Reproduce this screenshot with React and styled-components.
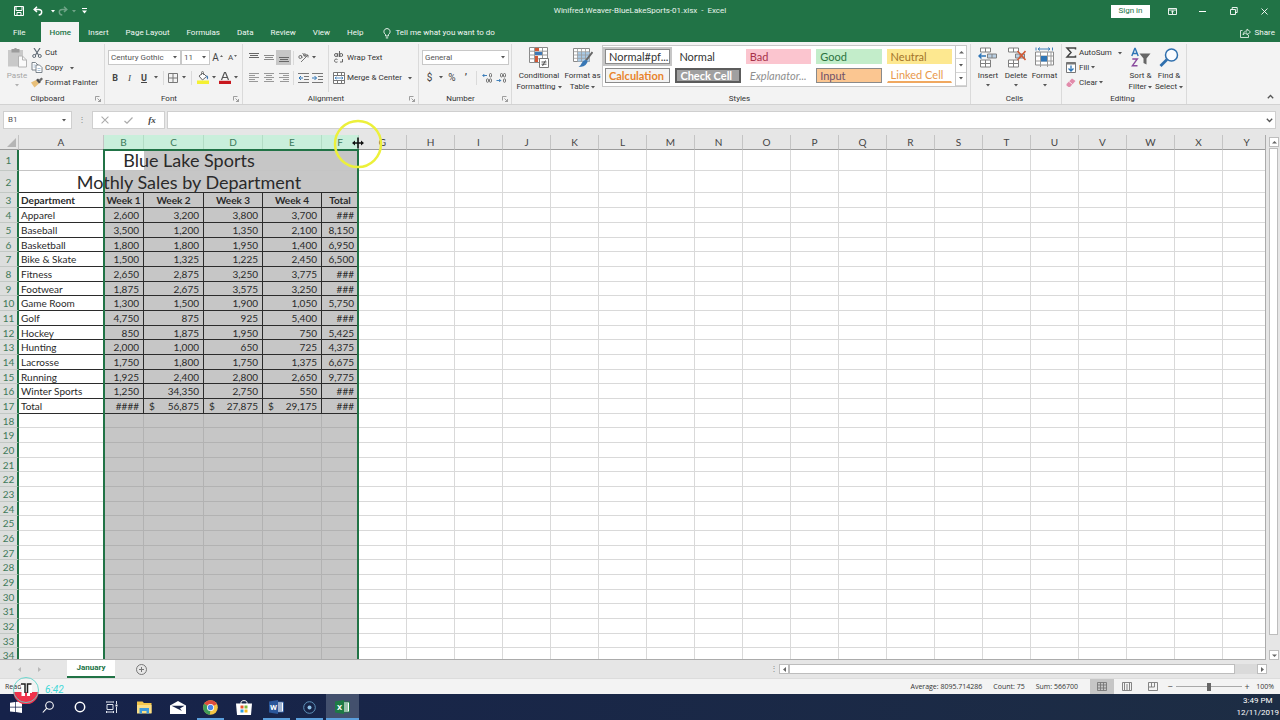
import React from 'react'
import styled, { createGlobalStyle } from 'styled-components'

const GlobalStyle = createGlobalStyle`
  * {
    box-sizing: border-box;
  }
  body {
    margin: 0;
    font-family: Roboto, 'Open Sans', sans-serif;
    font-size: 8px;
    line-height: 10px;
    color: #333;
  }
  button, input, select {
    margin: 0;
    padding: 0;
    border: 0;
    background: transparent;
    font: inherit;
    color: inherit;
  }
  button {
    white-space: nowrap;
  }
`

const sheetFont = "Lato, 'Open Sans', sans-serif"

const App = styled.div`
  position: relative;
  display: flex;
  flex-direction: column;
  height: 100vh;
  overflow: hidden;
  background-color: #e6e6e6;
`

/* title bar */
const TitleBar = styled.header`
  display: grid;
  grid-template-columns: 1fr auto 1fr;
  align-items: center;
  height: 22px;
  color: #e8f3ec;
  background-color: #217346;
`
const QuickAccess = styled.div`
  display: flex;
  align-items: center;
  padding-left: 11px;
`
const WindowControls = styled.div`
  display: flex;
  justify-content: flex-end;
  align-items: center;
`
const SignIn = styled.button`
  width: 39px;
  height: 13px;
  margin-right: 7px;
  color: #217346;
  background-color: #fff;
`
const Tool = styled.button`
  display: flex;
  flex: none;
  justify-content: center;
  align-items: center;
  width: ${(props) => props.$width || 15}px;
  height: 15px;
  background-color: ${(props) => (props.$pressed ? '#c6c6c6' : 'transparent')};
  opacity: ${(props) => (props.disabled ? 0.35 : 1)};
  svg {
    flex: none;
  }
`

/* ribbon tabs */
const TabBar = styled.nav`
  display: flex;
  align-items: stretch;
  height: 20px;
  color: #f2f8f4;
  background-color: #217346;
`
const RibbonTab = styled.button`
  padding: 2px ${(props) => (props.$first ? 15 : 8)}px 0
    ${(props) => (props.$first ? 13 : 9)}px;
  color: ${(props) => (props.$active ? '#217346' : 'inherit')};
  font-weight: ${(props) => (props.$active ? 500 : 400)};
  background-color: ${(props) => (props.$active ? '#f3f3f3' : 'transparent')};
`
const TellMe = styled.button`
  display: flex;
  align-items: center;
  gap: 4px;
  padding: 2px 0 0 12px;
`
const Share = styled(TellMe)`
  margin-left: auto;
  padding-right: 5px;
`

/* ribbon */
const Ribbon = styled.section`
  display: flex;
  flex: none;
  height: 63px;
  border-bottom: 1px solid #d2d2d2;
  background-color: #f3f3f3;
`
const GroupBox = styled.div`
  display: flex;
  flex-direction: column;
  flex: ${(props) => (props.$width ? 'none' : 1)};
  width: ${(props) => (props.$width ? `${props.$width}px` : 'auto')};
  margin-top: 2px;
  border-right: 1px solid #dadada;
`
const GroupBody = styled.div`
  display: flex;
  flex: 1;
  padding: 1px 3px 0;
`
const GroupFooter = styled.div`
  display: flex;
  align-items: center;
  height: 12px;
  padding: 2px 3px 0 0;
  span {
    flex: 1;
    text-align: center;
  }
`
const Stack = styled.div`
  display: flex;
  flex-direction: column;
  width: ${(props) => (props.$width ? `${props.$width}px` : 'auto')};
  padding-left: ${(props) => props.$inset || 0}px;
`
const ToolStack = styled(Stack)`
  gap: 5px;
  padding-top: 5px;
  border-right: ${(props) => (props.$divided ? '1px solid #dadada' : '0')};
`
const Row = styled.div`
  display: flex;
  align-items: center;
`
const Divider = styled.span`
  width: 1px;
  height: 14px;
  margin: 0 ${(props) => props.$gap || 3}px;
  background-color: #dadada;
`
const SmallButton = styled.button`
  display: flex;
  align-items: center;
  height: 15px;
  gap: 2px;
  svg {
    flex: none;
  }
  > svg:first-child {
    width: 12px;
  }
`
const FarCaret = styled.span`
  margin-left: ${(props) => props.$gap || 5}px;
`
const BigButton = styled.button`
  display: flex;
  flex: none;
  flex-direction: column;
  align-items: center;
  width: ${(props) => props.$width}px;
  height: 47px;
  padding-top: 2px;
  line-height: 11px;
  color: ${(props) => (props.disabled ? '#a6a6a6' : 'inherit')};
  > svg:first-child {
    flex: none;
    height: 21px;
    margin-bottom: 2px;
  }
  > svg:last-child {
    margin-top: 3px;
  }
`
const SelectFrame = styled.label`
  display: flex;
  align-items: center;
  width: ${(props) => props.$width}px;
  height: 15px;
  padding: 0 3px 0 2px;
  border: 1px solid #c8c8c8;
  background-color: #fff;
  select {
    flex: 1;
    min-width: 0;
    appearance: none;
    outline: 0;
    color: #555;
  }
`
const Glyph = styled.span`
  font-size: ${(props) => props.$size || 9}px;
  font-weight: ${(props) => (props.$bold ? 700 : 400)};
  font-style: ${(props) => (props.$italic ? 'italic' : 'normal')};
  text-decoration: ${(props) => (props.$underline ? 'underline' : 'none')};
  font-family: ${(props) => (props.$serif ? "'Liberation Serif', serif" : 'inherit')};
  color: #444;
`

const Gallery = styled.div`
  display: flex;
  flex: 1;
  height: 42px;
  border: 1px solid #c8c8c8;
  background-color: #fff;
`
const GalleryGrid = styled.div`
  display: grid;
  flex: 1;
  grid-template-columns: repeat(5, 1fr);
  grid-auto-rows: 15px;
  gap: 4px 5px;
  padding: 3px 3px 0 2px;
`
const StyleCell = styled.button`
  overflow: hidden;
  padding: 0 3px;
  border: ${(props) => props.$border || '1px solid transparent'};
  outline: ${(props) => (props.$selected ? '2px solid #c6c6c6' : '0')};
  font-family: ${sheetFont};
  font-size: 11px;
  line-height: 12px;
  font-weight: ${(props) => (props.$bold ? 700 : 400)};
  font-style: ${(props) => (props.$italic ? 'italic' : 'normal')};
  text-align: left;
  color: ${(props) => props.$color || '#333'};
  background-color: ${(props) => props.$background || '#fff'};
`
const GalleryScroll = styled.div`
  display: grid;
  grid-template-rows: 1fr 1fr 1fr;
  width: 11px;
  border-left: 1px solid #c8c8c8;
  button {
    display: flex;
    justify-content: center;
    align-items: center;
    border-bottom: 1px solid #d6d6d6;
  }
`
const Collapse = styled.div`
  display: flex;
  justify-content: flex-end;
  align-items: flex-end;
  width: 93px;
  padding: 0 6px 0 0;
`

/* formula bar */
const FormulaBar = styled.div`
  display: flex;
  flex: none;
  align-items: center;
  height: 30px;
  padding: 0 4px 0 3px;
`
const NameBox = styled.div`
  display: flex;
  align-items: center;
  width: 69px;
  height: 18px;
  padding: 0 4px;
  border: 1px solid #cfcfcf;
  background-color: #fff;
  input {
    flex: 1;
    min-width: 0;
    color: #555;
  }
`
const Grip = styled.span`
  width: ${(props) => (props.$narrow ? 10 : 20)}px;
  color: #888;
  text-align: center;
`
const FormulaTools = styled.div`
  display: flex;
  align-items: center;
  width: 73px;
  height: 18px;
  border: 1px solid #cfcfcf;
  background-color: #fff;
`
const FormulaField = styled.div`
  display: flex;
  flex: 1;
  align-items: center;
  height: 18px;
  margin-left: 2px;
  padding-right: 2px;
  border: 1px solid #cfcfcf;
  background-color: #fff;
  input {
    flex: 1;
    padding-left: 3px;
  }
`

/* sheet */
const SheetArea = styled.main`
  display: flex;
  flex: 1;
  min-height: 0;
`
const SheetView = styled.div`
  position: relative;
  flex: 1;
  min-width: 0;
  overflow: hidden;
  border-right: 1px solid #ababab;
  border-bottom: 1px solid #ababab;
  background-color: #fff;
`
const Table = styled.table`
  width: max-content;
  table-layout: fixed;
  border-collapse: separate;
  border-spacing: 0;
  font-family: ${sheetFont};
  font-size: 10px;
  line-height: 12px;
  color: #2a2a2a;
  th, td {
    overflow: hidden;
    padding: 0;
    white-space: nowrap;
  }
`
const ColumnHead = styled.th`
  height: 15px;
  border-right: 1px solid ${(props) => (props.$selected ? '#b3dcc5' : '#c4c4c4')};
  border-bottom: 1px solid ${(props) => (props.$selected ? '#217346' : '#9b9b9b')};
  font-size: 10px;
  font-weight: 400;
  color: ${(props) => (props.$selected ? '#3c7a5a' : '#444')};
  background-color: ${(props) => (props.$selected ? '#c9efdb' : '#e6e6e6')};
`
const Corner = styled(ColumnHead)`
  text-align: right;
  svg {
    display: block;
    margin: 0 2px 0 auto;
  }
`
const RowHead = styled.th`
  border-right: 2px solid #217346;
  border-bottom: 1px solid #c2c8c4;
  font-weight: 400;
  font-size: 10px;
  color: #3f7a5a;
  background-color: #dcdedd;
`
const TableRow = styled.tr`
  height: ${(props) => props.$height}px;
`
const Cell = styled.td`
  border-right: 1px solid
    ${(props) => (props.$boxed ? '#2b2b2b' : props.$selected ? '#b2b2b2' : '#d9d9d9')};
  border-bottom: 1px solid
    ${(props) => (props.$boxed ? '#2b2b2b' : props.$selected ? '#b2b2b2' : '#d9d9d9')};
  font-weight: ${(props) => (props.$bold ? 700 : 400)};
  text-align: ${(props) => props.$align || 'left'};
  background-color: ${(props) => (props.$selected ? '#c6c6c6' : '#fff')};
  && {
    padding: 0 ${(props) => (props.$align === 'right' ? 4 : 0)}px 0
      ${(props) => (props.$align ? 0 : 2)}px;
  }
`
const TitleCell = styled.td`
  border-bottom: 1px solid ${(props) => (props.$last ? '#2b2b2b' : '#c4c4c4')};
  font-size: 18px;
  line-height: 20px;
  text-align: center;
  background-image: linear-gradient(
    to right,
    #fff ${(props) => props.$white}px,
    #c6c6c6 ${(props) => props.$white}px
  );
`
const Accounting = styled.div`
  display: flex;
  justify-content: space-between;
  padding-left: 5px;
`
const SelectionFrame = styled.div`
  position: absolute;
  top: 14px;
  bottom: 0;
  left: 103px;
  width: 256px;
  border: 2px solid #217346;
  border-bottom: 0;
  pointer-events: none;
`
const ScrollColumn = styled.div`
  display: flex;
  flex-direction: column;
  width: 14px;
  padding: 2px 2px 0 3px;
`
const ScrollButton = styled.button`
  display: flex;
  flex: none;
  justify-content: center;
  align-items: center;
  width: 10px;
  height: 10px;
  border: 1px solid #bdbdbd;
  background-color: #fff;
`
const VerticalThumb = styled.div`
  flex: 1;
  margin: 1px 0 15px;
  border: 1px solid #bdbdbd;
  background-color: #fff;
`

/* sheet tabs and status */
const SheetTabs = styled.div`
  display: flex;
  flex: none;
  align-items: center;
  height: 18px;
  padding: 0 13px 0 10px;
`
const SheetTab = styled.button`
  align-self: stretch;
  width: 48px;
  margin: 0 19px 0 18px;
  border-bottom: 2px solid #217346;
  font-weight: 700;
  color: #217346;
  background-color: #fff;
`
const HorizontalScroll = styled.div`
  display: flex;
  align-items: center;
  width: 498px;
  margin-left: auto;
`
const HorizontalTrack = styled.div`
  flex: 1;
  height: 10px;
  padding-right: 22px;
  background-color: #dadada;
`
const HorizontalThumb = styled.div`
  height: 10px;
  border: 1px solid #bdbdbd;
  background-color: #fff;
`
const StatusBar = styled.footer`
  display: flex;
  flex: none;
  align-items: center;
  height: 16px;
  padding: 0 6px 0 5px;
  border-top: 1px solid #dcdcdc;
  background-color: #f3f3f3;
  font-family: 'Open Sans', sans-serif;
  font-size: 7px;
`
const Stats = styled.div`
  display: flex;
  gap: 11px;
  margin: 0 12px 0 auto;
`
const Zoom = styled.input`
  width: 66px;
  height: 10px;
  margin: 0 1px;
  appearance: none;
  background: linear-gradient(#a9a9a9, #a9a9a9) center / 100% 1px no-repeat;
  &::-webkit-slider-thumb {
    width: 4px;
    height: 8px;
    appearance: none;
    background-color: #666;
  }
`
const Percent = styled.span`
  width: 23px;
  text-align: right;
`

/* taskbar */
const Taskbar = styled.div`
  display: flex;
  flex: none;
  height: 26px;
  color: #fff;
  background-image: linear-gradient(to right, #16224a, #1d2d44);
`
const TaskItem = styled.button`
  display: flex;
  justify-content: center;
  align-items: center;
  width: ${(props) => (props.$app ? 33 : 32)}px;
  background: ${(props) => (props.$active ? '#43506d' : 'transparent')};
  box-shadow: ${(props) => (props.$active ? 'inset 0 -2px #5b9fdc' : 'none')};
`
const Running = styled.span`
  display: flex;
  justify-content: center;
  align-items: center;
  width: 27px;
  height: 26px;
  box-shadow: inset 0 -2px #5b9fdc;
`
const Clock = styled.div`
  display: flex;
  flex-direction: column;
  align-items: center;
  gap: 2px;
  margin-left: auto;
  padding: 2px 1px 0 0;
`

/* recorder badge and pointer */
const Recorder = styled.div`
  position: absolute;
  bottom: 16px;
  left: 12px;
  display: flex;
  align-items: center;
  gap: 5px;
  font-size: 10px;
  font-style: italic;
  color: #3fd8d8;
`
const Pointer = styled.svg`
  position: absolute;
  top: 119px;
  left: 333px;
`

const Caret = ({ color = '#555', size = 4 }) => (
  <svg width={size} height="3" viewBox="0 0 4 3" fill={color}>
    <path d="M0 0h4L2 2.5z" />
  </svg>
)

const Launcher = () => (
  <svg width="6" height="6" viewBox="0 0 6 6" fill="none" stroke="#888" strokeWidth="0.8">
    <path d="M.5 4.5v-4h4M2.500 2.500l3 3M5.500 3v2.500H3" />
  </svg>
)

const LineIcon = ({ lines, color = '#666', width = 10 }) => (
  <svg width={width} height="11" viewBox="0 0 10 11" stroke={color}>
    {lines.map(([x1, x2, y]) => (
      <path key={y} d={`M${x1} ${y}H${x2}`} />
    ))}
  </svg>
)

const vertical = {
  top: [[0, 10, 1.5], [1, 9, 3.5], [0, 10, 5.5]],
  middle: [[0, 10, 3.5], [1, 9, 5.5], [0, 10, 7.5]],
  bottom: [[0, 10, 5.5], [1, 9, 7.5], [0, 10, 9.5]],
}
const horizontal = {
  left: [[0, 10, 1.5], [0, 6, 3.5], [0, 10, 5.5], [0, 6, 7.5], [0, 9, 9.5]],
  center: [[0, 10, 1.5], [2, 8, 3.5], [0, 10, 5.5], [2, 8, 7.5], [0, 10, 9.5]],
  right: [[0, 10, 1.5], [4, 10, 3.5], [0, 10, 5.5], [4, 10, 7.5], [1, 10, 9.5]],
}

const SaveIcon = () => (
  <svg width="10" height="10" viewBox="0 0 10 10" fill="none" stroke="#fff">
    <path d="M.5.5h9v9h-9zM2 .5v4h6v-4M3 9.5v-3h4v3" />
  </svg>
)
const UndoIcon = ({ flip }) => (
  <svg
    width="10"
    height="10"
    viewBox="0 0 10 10"
    fill="none"
    stroke="#fff"
    strokeWidth="1.5"
    transform={flip ? 'scale(-1 1)' : undefined}
  >
    <path d="M4 .7 1.2 3.4 4 6M1.5 3.4h4.2c4.3.2 3.6 5.4 0 5.6" />
  </svg>
)
const CustomizeIcon = () => (
  <svg width="5" height="6" viewBox="0 0 5 6" fill="#fff">
    <path d="M0 0h5v1H0zM0 2.5h5L2.5 5.5z" />
  </svg>
)
const RibbonOptionsIcon = () => (
  <svg width="9" height="7" viewBox="0 0 9 7" fill="none" stroke="#fff" strokeWidth="0.9">
    <path d="M.5.5h8v6h-8zM.5 2h8M4.5 6V3M3.2 4.2l1.3-1.3 1.3 1.3" />
  </svg>
)
const MinimizeIcon = () => (
  <svg width="7" height="7" viewBox="0 0 7 7" stroke="#fff">
    <path d="M0 3.5h7" />
  </svg>
)
const RestoreIcon = () => (
  <svg width="8" height="8" viewBox="0 0 8 8" fill="none" stroke="#fff" strokeWidth="0.9">
    <path d="M.5 2.5h5v5h-5zM2.2 2.5v-2h5v5h-2" />
  </svg>
)
const CloseIcon = ({ color = '#fff', size = 7 }) => (
  <svg width={size} height={size} viewBox="0 0 7 7" stroke={color} strokeWidth="0.9">
    <path d="m.5.5 6 6M6.5.5l-6 6" />
  </svg>
)
const BulbIcon = () => (
  <svg width="8" height="11" viewBox="0 0 8 11" fill="none" stroke="#fff" strokeWidth="0.9">
    <path d="M2.6 8V6.6C-.4 4.400 1 .6 4 .6s4.400 3.800 1.400 6V8zM2.800 9.900h2.400" />
  </svg>
)
const ShareIcon = () => (
  <svg width="11" height="10" viewBox="0 0 11 10" fill="none" stroke="#dcebe2" strokeWidth="0.9">
    <path d="M2.500 2.500h-2v7h8V7M3 7c.3-3 2-4 4-4V1l3.500 3L7 7V5C5.500 5 4 5.500 3 7z" />
  </svg>
)
const PasteIcon = () => (
  <svg width="19" height="20" viewBox="0 0 19 20">
    <path d="M0 2.500h15V19H0z" fill="#c9c9c9" />
    <path d="M3.500 1.500h2.500a1.600 1.600 0 0 1 3 0h2.500V5h-8z" fill="#9c9c9c" />
    <path d="M10.500 8.500h4l4 4v7h-8z" fill="#fafafa" stroke="#b4b4b4" />
    <path d="M14.500 8.500v4h4" fill="none" stroke="#b4b4b4" />
  </svg>
)
const CutIcon = () => (
  <svg width="10" height="10" viewBox="0 0 10 10" fill="none" stroke="#5f6a75">
    <path d="M2 0 6.500 7M8 0 3.500 7" strokeWidth="1.200" />
    <circle cx="2.200" cy="8" r="1.500" />
    <circle cx="7.800" cy="8" r="1.500" />
  </svg>
)
const CopyIcon = () => (
  <svg width="12" height="11" viewBox="0 0 12 11" fill="#fff" stroke="#6d7780" strokeWidth="0.900">
    <path d="M1 .500h3.500L7 3v5H1z" />
    <path d="M5 3h3.500L11 5.500v5H5z" />
    <path d="M2.500 3h2M2.500 5h2M6.500 6.500h3M6.500 8.500h3" stroke="#86a9c9" strokeWidth="0.700" />
  </svg>
)
const PainterIcon = () => (
  <svg width="12" height="11" viewBox="0 0 12 11">
    <path d="M0 5.500 5 3l3 3.500-4.500 4z" fill="#e8bf79" />
    <path d="m5 3 2-1.500L10 5 8 6.500z" fill="#4a4a4a" />
    <path d="m8 2.500 2.500-2L12 2 9.500 4.500z" fill="#6a6a6a" />
  </svg>
)
const BordersIcon = () => (
  <svg width="10" height="10" viewBox="0 0 10 10" fill="none" stroke="#777">
    <path d="M.5.5h9v9h-9zM5 .5v9M.5 5h9" />
  </svg>
)
const FillIcon = () => (
  <svg width="12" height="13" viewBox="0 0 12 13">
    <path d="m2 5 4-3 3.500 3.500L5.500 9z" fill="#fff" stroke="#666" />
    <path d="M4.500 4V1.500a1 1 0 0 1 2 0V4" fill="none" stroke="#666" strokeWidth="0.800" />
    <path d="M9.500 4c2 1 2 3 1 4.500-.8-1-1-2-1-4.500z" fill="#3a76b4" />
    <path d="M0 9.500h12V13H0z" fill="#f4f032" />
  </svg>
)
const FontColorIcon = () => (
  <svg width="12" height="13" viewBox="0 0 12 13">
    <path d="m2.500 9 3-7.500h1L9.500 9M3.800 6.500h4.400" fill="none" stroke="#555" strokeWidth="1.200" />
    <path d="M0 9.800h12V13H0z" fill="#c8171e" />
  </svg>
)
const OrientationIcon = () => (
  <svg width="11" height="11" viewBox="0 0 11 11" fill="none" stroke="#666" strokeWidth="0.900">
    <path d="m3 10 7-7M10 5.500V3H7.500" />
    <circle cx="2.300" cy="5" r="1.500" />
    <path d="m2.500 3 2 2.500M4.500 1l3 3.500" />
    <circle cx="6.800" cy="3" r="1.200" />
  </svg>
)
const IndentIcon = ({ out }) => (
  <svg width="11" height="10" viewBox="0 0 11 10" stroke="#777">
    <path d="M0 .5h11M6 3.500h5M6 6.500h5M0 9.500h11" />
    <path d={out ? 'M5 5H1M3 3 1 5l2 2' : 'M0 5h4.500M2.500 3l2 2-2 2'} stroke="#2e75b6" fill="none" />
  </svg>
)
const WrapIcon = () => (
  <svg width="12" height="13" viewBox="0 0 12 13" fill="none" stroke="#555" strokeWidth="0.900">
    <circle cx="3" cy="4" r="1.500" />
    <path d="M4.800 2v4M6.500 0v6M4.500 8.500c-2-1.200-3 .2-3 1.200s1 2.200 3 1.200M7 11h2.500V8" />
    <circle cx="8.200" cy="4" r="1.500" />
  </svg>
)
const MergeIcon = () => (
  <svg width="12" height="12" viewBox="0 0 12 12" fill="#fff" stroke="#777">
    <path d="M.5.500h11v11H.500zM.500 3.500h11M.500 8.500h11M4.500.500v3M8.500.500v3M4.500 8.500v3M8.500 8.500v3" />
    <path d="M2 6h8M3.500 4.800 2 6l1.500 1.200M8.500 4.800 10 6 8.500 7.200" stroke="#2e75b6" strokeWidth="0.800" fill="none" />
  </svg>
)
const DecimalIcon = ({ increase }) => (
  <svg width="11" height="10" viewBox="0 0 11 10" fill="none" stroke="#666" strokeWidth="0.900">
    {increase ? (
      <>
        <path d="M5 2.500H.8M2.300 1 .8 2.500 2.300 4" stroke="#2e75b6" />
        <rect x="7.500" y=".500" width="2" height="3.500" rx="1" />
        <rect x="4.500" y="5.800" width="2" height="3.500" rx="1" />
      </>
    ) : (
      <>
        <path d="M.5 7.500h4.200M3.200 6l1.500 1.500L3.200 9" stroke="#2e75b6" />
        <rect x="4.500" y=".500" width="2" height="3.500" rx="1" />
        <rect x="7.500" y=".500" width="2" height="3.500" rx="1" />
      </>
    )}
    <rect x="7.500" y="5.800" width="2" height="3.500" rx="1" />
  </svg>
)
const ConditionalIcon = () => (
  <svg width="20" height="21" viewBox="0 0 20 21">
    <path d="M.5.500h18v15H.500z" fill="#fff" stroke="#8a8a8a" />
    <path d="M.5 4.200h18M.5 8h18M.5 11.800h18M5.500.500v15M13.500.500v15" stroke="#9a9a9a" />
    <path d="M6 1h4v3H6zM6 9h3v6H6z" fill="#d35735" />
    <path d="M6 5h7v3H6z" fill="#3f78b5" />
    <path d="M10.500 11.500h9v9h-9z" fill="#fff" stroke="#777" />
    <path d="M12.500 15h5M12.500 17.200h5M16.500 13.500l-3 5.500" stroke="#444" strokeWidth="0.900" />
  </svg>
)
const FormatTableIcon = () => (
  <svg width="20" height="21" viewBox="0 0 20 21">
    <path d="M.5 1.500h16v13H.500z" fill="#fff" stroke="#8a8a8a" />
    <path d="M4.500 5h12v9.500h-12z" fill="#a9cae6" />
    <path d="M.5 4.700h16M.5 8h16M.5 11.300h16M4.500 1.500v13M8.500 1.500v13M12.500 1.500v13" stroke="#9a9a9a" strokeWidth="0.800" />
    <path d="M19.500 5 13 13.500" stroke="#666" strokeWidth="2" />
    <path d="M12.500 13c2 0 2.500 1.500 1.500 3-1.500 3-5 4-8.500 4 3-1.500 3-6 7-7z" fill="#3777b5" />
  </svg>
)
const CellsIcon = ({ remove }) => (
  <svg width="20" height="20" viewBox="0 0 20 20" fill="#fff" stroke="#808080">
    <path d="M2.500.500h10v4h-10zM7.500.500v4M2.500 12.500h10v7h-10zM7.500 12.500v7M2.500 16h10" />
    <path d="M9.500 6.500h9v4h-9zM14 6.500v4" fill="#b9cfe3" />
    {remove ? (
      <path d="m11.500 3.500 8 9M19.500 3.500l-8 9" stroke="#d25a35" strokeWidth="1.600" />
    ) : (
      <path d="M8 8.500H1M3.500 6 1 8.500 3.500 11" stroke="#2e75b6" strokeWidth="1.400" fill="none" />
    )}
  </svg>
)
const FormatCellsIcon = () => (
  <svg width="20" height="20" viewBox="0 0 20 20" fill="none">
    <path d="M.5 4.500h18v13H.500z" fill="#fff" stroke="#8a8a8a" />
    <path d="M.5 8.500h18M.5 13.500h18M5.500 4.500v15M12.500 4.500v15M16 4.500v13" stroke="#9a9a9a" />
    <path d="M6 8.500h6v5.500H6z" fill="#2e75b6" />
    <path d="M3 1.500h12M5 0 3 1.500 5 3M13 0l2 1.500L13 3M1 0v3M17.500 0v3" stroke="#2e75b6" strokeWidth="0.900" />
  </svg>
)
const SumIcon = () => (
  <svg width="11" height="11" viewBox="0 0 11 11" fill="none" stroke="#444" strokeWidth="1.500">
    <path d="M10 2.500V1H1.500l4 4.500-4 4.500H10V8.500" />
  </svg>
)
const FillDownIcon = () => (
  <svg width="11" height="11" viewBox="0 0 11 11" fill="#fff" stroke="#777">
    <path d="M1 .500h9v10H1z" />
    <path d="M1 1.500h9" strokeWidth="2" />
    <path d="M5.500 3.500v5.500M3 6.500 5.500 9 8 6.500" stroke="#2e75b6" strokeWidth="1.300" fill="none" />
  </svg>
)
const EraserIcon = () => (
  <svg width="11" height="10" viewBox="0 0 11 10">
    <path d="m1 6 5.500-5.500L10 3 4.500 9H3L1 7.500z" fill="#e28bab" />
    <path d="m3.500 3.500 3.500 3" stroke="#fff" strokeWidth="0.800" />
  </svg>
)
const SortIcon = () => (
  <svg width="20" height="20" viewBox="0 0 20 20" fill="none">
    <path d="M.8 8.500 3.800 1h.4l3 7.500M2 6h4" stroke="#2e75b6" strokeWidth="1.400" />
    <path d="M1.300 11.500h5L1.300 18.300h5.200" stroke="#8a4a9e" strokeWidth="1.400" />
    <path d="M8.500 6h11L15.500 11v6l-3-1.500V11z" fill="#666" />
  </svg>
)
const FindIcon = () => (
  <svg width="20" height="20" viewBox="0 0 20 20" fill="none" stroke="#2f6fad">
    <circle cx="12.500" cy="7.500" r="6" strokeWidth="1.500" fill="#fafcff" />
    <path d="m8 12-6.500 6.500" strokeWidth="2.800" />
  </svg>
)
const ChevronIcon = ({ up, color = '#555' }) => (
  <svg width="7" height="5" viewBox="0 0 7 5" fill="none" stroke={color} strokeWidth="1.300">
    <path d={up ? 'M.8 4.200 3.500 1.500l2.700 2.700' : 'M.8.8l2.700 2.700L6.200.8'} />
  </svg>
)
const CheckIcon = () => (
  <svg width="9" height="7" viewBox="0 0 9 7" fill="none" stroke="#aaa" strokeWidth="1.200">
    <path d="M.5 4 3 6.200 8.500.5" />
  </svg>
)
const ArrowIcon = ({ d }) => (
  <svg width="5" height="5" viewBox="0 0 5 5" fill="#666">
    <path d={d} />
  </svg>
)
const AddIcon = () => (
  <svg width="11" height="11" viewBox="0 0 11 11" fill="none" stroke="#777">
    <circle cx="5.500" cy="5.500" r="5" />
    <path d="M5.500 3v5M3 5.500h5" />
  </svg>
)
const ViewIcon = ({ d }) => (
  <svg width="10" height="9" viewBox="0 0 10 9" fill="none" stroke="#777" strokeWidth="0.900">
    <path d="M.5.500h9v8h-9z" />
    <path d={d} />
  </svg>
)

const WindowsIcon = () => (
  <svg width="12" height="12" viewBox="0 0 12 12" fill="#fff">
    <path d="M0 1.700 5 1v4.700H0zM5.700.9 12 0v5.700H5.700zM0 6.400h5v4.700l-5-.7zM5.700 6.400H12V12l-6.300-.9z" />
  </svg>
)
const SearchIcon = () => (
  <svg width="12" height="12" viewBox="0 0 12 12" fill="none" stroke="#fff" strokeWidth="1.100">
    <circle cx="7.500" cy="4.500" r="3.800" />
    <path d="M4.800 7.200.8 11.500" />
  </svg>
)
const CortanaIcon = () => (
  <svg width="12" height="12" viewBox="0 0 12 12" fill="none" stroke="#fff" strokeWidth="1.500">
    <circle cx="6" cy="6" r="4.700" />
  </svg>
)
const TaskViewIcon = () => (
  <svg width="12" height="12" viewBox="0 0 12 12" fill="none" stroke="#dfe4ee">
    <path d="M1 3.500h6v5H1zM.500 1.500v-1M7.500 1.500v-1M.500 1h7M.500 11h7M.500 10v2M7.500 10v2M10.500 0v3M10.500 6v6" />
    <path d="M9.500 3.500h2v2h-2z" fill="#fff" stroke="none" />
  </svg>
)
const FolderIcon = () => (
  <svg width="15" height="13" viewBox="0 0 15 13">
    <path d="M0 .500h5.500L7 2h7.500v10H0z" fill="#f3c64b" />
    <path d="M0 4h14.500v8.500H0z" fill="#fbdf86" />
    <path d="M2.500 12.500V7h9.500v5.500H9.500V10H5v2.500z" fill="#3f9bdc" />
  </svg>
)
const MailIcon = () => (
  <svg width="16" height="13" viewBox="0 0 16 13">
    <path d="M0 4.500 8 0l8 4.500V13H0z" fill="#fff" />
    <path d="M1.500 4.800h13L10 7.500l2 2.500-4-2z" fill="#19254a" />
  </svg>
)
const ChromeIcon = () => (
  <svg width="15" height="15" viewBox="0 0 15 15">
    <circle cx="7.500" cy="7.500" r="7.300" fill="#f6c544" />
    <path d="M7.500 7.500 1.200 3.800A7.300 7.300 0 0 1 13.900 4z" fill="#dd4b3e" />
    <path d="M7.500 7.500 1.200 3.800a7.300 7.300 0 0 0 5.700 11z" fill="#3f9d58" />
    <circle cx="7.500" cy="7.500" r="3.500" fill="#fff" />
    <circle cx="7.500" cy="7.500" r="2.700" fill="#4a86e8" />
  </svg>
)
const StoreIcon = () => (
  <svg width="16" height="15" viewBox="0 0 16 15">
    <path d="M5 4V2.500C5 0 11 0 11 2.500V4" fill="none" stroke="#fff" />
    <path d="M0 3.500h16L15 15H1z" fill="#fff" />
    <path d="M4.500 5.500h3v3h-3z" fill="#e8502c" />
    <path d="M8.500 5.500h3v3h-3z" fill="#7fb93a" />
    <path d="M4.500 9.500h3v3h-3z" fill="#2a9fe0" />
    <path d="M8.500 9.500h3v3h-3z" fill="#f5b81f" />
  </svg>
)
const OfficeIcon = ({ letter, color }) => (
  <svg width="15" height="14" viewBox="0 0 15 14">
    <path d="M7 2h7.500v10H7z" fill="#fff" stroke={color} />
    <path d="M9 4h4M9 6h4M9 8h4M9 10h4" stroke={color} strokeWidth="0.900" />
    <path d="M0 1.500 9 0v14l-9-1.500z" fill={color} />
    <text x="4.500" y="10" fill="#fff" fontSize="8" fontWeight="700" textAnchor="middle">
      {letter}
    </text>
  </svg>
)
const RecordIcon = () => (
  <svg width="13" height="13" viewBox="0 0 13 13" fill="none" stroke="#5f93ba">
    <circle cx="6.500" cy="6.500" r="5.800" />
    <circle cx="6.500" cy="6.500" r="2" fill="#8fc4ea" stroke="none" />
  </svg>
)

const Group = ({ label, width, launcher, children }) => (
  <GroupBox $width={width}>
    <GroupBody>{children}</GroupBody>
    <GroupFooter>
      <span>{label}</span>
      {launcher && <Launcher />}
    </GroupFooter>
  </GroupBox>
)

const Picker = ({ label, width, value }) => (
  <SelectFrame $width={width}>
    <select aria-label={label} defaultValue={value}>
      <option>{value}</option>
    </select>
    <Caret />
  </SelectFrame>
)

const cellStyles = [
  { name: 'Normal#pf...', $border: '1px solid #8a8a8a', $selected: true },
  { name: 'Normal' },
  { name: 'Bad', $color: '#a8324a', $background: '#fbc5cf' },
  { name: 'Good', $color: '#2c7440', $background: '#c3edca' },
  { name: 'Neutral', $color: '#a3742a', $background: '#fde890' },
  { name: 'Calculation', $color: '#e8832c', $background: '#f3f3f3', $border: '1px solid #8a8a8a', $bold: true },
  { name: 'Check Cell', $color: '#fff', $background: '#a0a0a0', $border: '2px solid #5c5c5c', $bold: true },
  { name: 'Explanator...', $color: '#8f8f8f', $italic: true },
  { name: 'Input', $color: '#70506a', $background: '#fbc691', $border: '1px solid #8a8a8a' },
  { name: 'Linked Cell', $color: '#e8994c', $underlined: true },
]

const UnderlinedCell = styled(StyleCell)`
  border-bottom: 2px solid #f0a860;
`

const columns = [
  ['A', 85], ['B', 40], ['C', 60], ['D', 59], ['E', 59], ['F', 37],
  ...'GHIJKLMNOPQRSTUVWXY'.split('').map((name) => [name, 48]),
]

const sales = [
  ['Apparel', '2,600', '3,200', '3,800', '3,700', '###'],
  ['Baseball', '3,500', '1,200', '1,350', '2,100', '8,150'],
  ['Basketball', '1,800', '1,800', '1,950', '1,400', '6,950'],
  ['Bike & Skate', '1,500', '1,325', '1,225', '2,450', '6,500'],
  ['Fitness', '2,650', '2,875', '3,250', '3,775', '###'],
  ['Footwear', '1,875', '2,675', '3,575', '3,250', '###'],
  ['Game Room', '1,300', '1,500', '1,900', '1,050', '5,750'],
  ['Golf', '4,750', '875', '925', '5,400', '###'],
  ['Hockey', '850', '1,875', '1,950', '750', '5,425'],
  ['Hunting', '2,000', '1,000', '650', '725', '4,375'],
  ['Lacrosse', '1,750', '1,800', '1,750', '1,375', '6,675'],
  ['Running', '1,925', '2,400', '2,800', '2,650', '9,775'],
  ['Winter Sports', '1,250', '34,350', '2,750', '550', '###'],
  ['Total', '####', '$56,875', '$27,875', '$29,175', '###'],
]
const headings = ['Department', 'Week 1', 'Week 2', 'Week 3', 'Week 4', 'Total']
const emptyRows = Array.from({ length: 17 }, (_, i) => i + 18)

const rowHeight = (number) => (number % 3 === 0 ? 14 : 15)

const Blanks = ({ from = 6 }) =>
  columns
    .slice(from)
    .map(([name], i) => <Cell key={name} $selected={from + i > 0 && from + i < 6} />)

const Value = ({ text }) =>
  text.startsWith('$') ? (
    <Accounting>
      <span>$</span>
      <span>{text.slice(1)}</span>
    </Accounting>
  ) : (
    text
  )

const Sheet = () => (
  <SheetView>
    <Table>
      <colgroup>
        <col style={{ width: 19 }} />
        {columns.map(([name, width]) => (
          <col key={name} style={{ width }} />
        ))}
      </colgroup>
      <thead>
        <tr>
          <Corner>
            <svg width="9" height="9" viewBox="0 0 9 9" fill="#b5b5b5">
              <path d="M9 0v9H0z" />
            </svg>
          </Corner>
          {columns.map(([name], i) => (
            <ColumnHead key={name} scope="col" $selected={i > 0 && i < 6}>
              {name}
            </ColumnHead>
          ))}
        </tr>
      </thead>
      <tbody>
        <TableRow $height={21}>
          <RowHead scope="row">1</RowHead>
          <TitleCell colSpan={6} $white={125}>Blue Lake Sports</TitleCell>
          <Blanks />
        </TableRow>
        <TableRow $height={22}>
          <RowHead scope="row">2</RowHead>
          <TitleCell colSpan={6} $white={85} $last>Mothly Sales by Department</TitleCell>
          <Blanks />
        </TableRow>
        <TableRow $height={15}>
          <RowHead scope="row">3</RowHead>
          {headings.map((text, i) => (
            <Cell key={text} $boxed $bold $selected={i > 0} $align={i > 0 ? 'center' : undefined}>
              {text}
            </Cell>
          ))}
          <Blanks />
        </TableRow>
        {sales.map((values, row) => (
          <TableRow key={values[0]} $height={rowHeight(row + 4)}>
            <RowHead scope="row">{row + 4}</RowHead>
            {values.map((text, i) => (
              <Cell key={i} $boxed $selected={i > 0} $align={i > 0 ? 'right' : undefined}>
                <Value text={text} />
              </Cell>
            ))}
            <Blanks />
          </TableRow>
        ))}
        {emptyRows.map((number) => (
          <TableRow key={number} $height={rowHeight(number)}>
            <RowHead scope="row">{number}</RowHead>
            <Blanks from={0} />
          </TableRow>
        ))}
      </tbody>
    </Table>
    <SelectionFrame />
  </SheetView>
)

const tabs = ['File', 'Home', 'Insert', 'Page Layout', 'Formulas', 'Data', 'Review', 'View', 'Help']

export default function ExcelWindow() {
  return (
    <App>
      <GlobalStyle />
      <TitleBar>
        <QuickAccess>
          <Tool aria-label="Save"><SaveIcon /></Tool>
          <Tool aria-label="Undo" $width={24}><UndoIcon /></Tool>
          <Tool aria-label="Undo list" $width={5}><Caret color="#fff" /></Tool>
          <Tool aria-label="Redo" $width={15} disabled><UndoIcon flip /></Tool>
          <Tool aria-label="Redo list" $width={7} disabled><Caret color="#fff" /></Tool>
          <Tool aria-label="Customize toolbar" $width={15}><CustomizeIcon /></Tool>
        </QuickAccess>
        <span>Winifred.Weaver-BlueLakeSports-01.xlsx&nbsp; -&nbsp; Excel</span>
        <WindowControls>
          <SignIn>Sign in</SignIn>
          <Tool aria-label="Ribbon display" $width={30}><RibbonOptionsIcon /></Tool>
          <Tool aria-label="Minimize" $width={31}><MinimizeIcon /></Tool>
          <Tool aria-label="Restore" $width={31}><RestoreIcon /></Tool>
          <Tool aria-label="Close" $width={31}><CloseIcon /></Tool>
        </WindowControls>
      </TitleBar>
      <TabBar>
        {tabs.map((name) => (
          <RibbonTab key={name} $first={name === 'File'} $active={name === 'Home'}>
            {name}
          </RibbonTab>
        ))}
        <TellMe><BulbIcon />Tell me what you want to do</TellMe>
        <Share><ShareIcon />Share</Share>
      </TabBar>

      <Ribbon>
        <Group label="Clipboard" width={105} launcher>
          <BigButton $width={28} disabled><PasteIcon />Paste<Caret color="#b0b0b0" /></BigButton>
          <Stack>
            <SmallButton><CutIcon />Cut</SmallButton>
            <SmallButton><CopyIcon />Copy<FarCaret><Caret /></FarCaret></SmallButton>
            <SmallButton><PainterIcon />Format Painter</SmallButton>
          </Stack>
        </Group>
        <Group label="Font" width={138} launcher>
          <ToolStack>
            <Row>
              <Picker label="Font" width={73} value="Century Gothic" />
              <Picker label="Font size" width={29} value="11" />
              <Tool aria-label="Increase font size" $width={16}><Glyph $size={10}>A</Glyph><ArrowIcon d="M1 2 2.500 0 4 2z" /></Tool>
              <Tool aria-label="Decrease font size" $width={14}><Glyph $size={8}>A</Glyph><ArrowIcon d="M1 0h3L2.500 2z" /></Tool>
            </Row>
            <Row>
              <Tool $width={14}><Glyph $bold>B</Glyph></Tool>
              <Tool><Glyph $italic $serif>I</Glyph></Tool>
              <Tool $width={14}><Glyph $underline $bold>U</Glyph></Tool>
              <Tool aria-label="Underline styles" $width={9}><Caret /></Tool>
              <Divider />
              <Tool aria-label="Borders" $width={12}><BordersIcon /></Tool>
              <Tool aria-label="Border styles" $width={9}><Caret /></Tool>
              <Divider />
              <Tool aria-label="Fill color"><FillIcon /></Tool>
              <Tool aria-label="Fill colors" $width={7}><Caret /></Tool>
              <Tool aria-label="Font color"><FontColorIcon /></Tool>
              <Tool aria-label="Font colors" $width={7}><Caret /></Tool>
            </Row>
          </ToolStack>
        </Group>
        <Group label="Alignment" width={176} launcher>
          <ToolStack $width={83} $divided>
            <Row>
              <Tool aria-label="Top align"><LineIcon lines={vertical.top} /></Tool>
              <Tool aria-label="Middle align"><LineIcon lines={vertical.middle} color="#8a8a8a" /></Tool>
              <Tool aria-label="Bottom align" $pressed><LineIcon lines={vertical.bottom} /></Tool>
              <Divider $gap={2} />
              <Tool aria-label="Orientation" $width={14}><OrientationIcon /></Tool>
              <Tool aria-label="Orientations" $width={7}><Caret /></Tool>
            </Row>
            <Row>
              <Tool aria-label="Align left"><LineIcon lines={horizontal.left} color="#999" /></Tool>
              <Tool aria-label="Center"><LineIcon lines={horizontal.center} color="#999" /></Tool>
              <Tool aria-label="Align right"><LineIcon lines={horizontal.right} color="#999" /></Tool>
              <Divider $gap={2} />
              <Tool aria-label="Decrease indent" $width={14}><IndentIcon out /></Tool>
              <Tool aria-label="Increase indent"><IndentIcon /></Tool>
            </Row>
          </ToolStack>
          <ToolStack $inset={4}>
            <SmallButton><WrapIcon />Wrap Text</SmallButton>
            <SmallButton><MergeIcon />Merge &amp; Center<FarCaret $gap={4}><Caret /></FarCaret></SmallButton>
          </ToolStack>
        </Group>
        <Group label="Number" width={93} launcher>
          <ToolStack>
            <Picker label="Number format" width={87} value="General" />
            <Row>
              <Tool><Glyph $size={10}>$</Glyph></Tool>
              <Tool aria-label="Currency" $width={8}><Caret /></Tool>
              <Tool $width={14}><Glyph $size={10}>%</Glyph></Tool>
              <Tool $width={14}><Glyph $size={10} $bold>’</Glyph></Tool>
              <Divider />
              <Tool aria-label="Increase decimal" $width={14}><DecimalIcon increase /></Tool>
              <Tool aria-label="Decrease decimal" $width={14}><DecimalIcon /></Tool>
            </Row>
          </ToolStack>
        </Group>
        <Group label="Styles">
          <BigButton $width={48}>
            <ConditionalIcon />
            <span>Conditional</span>
            <span>Formatting <Caret /></span>
          </BigButton>
          <BigButton $width={39}>
            <FormatTableIcon />
            <span>Format as</span>
            <span>Table <Caret /></span>
          </BigButton>
          <Gallery>
            <GalleryGrid>
              {cellStyles.map(({ name, $underlined, ...look }) => {
                const Item = $underlined ? UnderlinedCell : StyleCell
                return <Item key={name} {...look}>{name}</Item>
              })}
            </GalleryGrid>
            <GalleryScroll>
              <button aria-label="Previous styles"><ArrowIcon d="M0 3.500h5L2.500 1z" /></button>
              <button aria-label="Next styles"><Caret /></button>
              <button aria-label="More styles"><Caret /></button>
            </GalleryScroll>
          </Gallery>
        </Group>
        <Group label="Cells" width={91}>
          <BigButton $width={28}><CellsIcon />Insert<Caret /></BigButton>
          <BigButton $width={28}><CellsIcon remove />Delete<Caret /></BigButton>
          <BigButton $width={29}><FormatCellsIcon />Format<Caret /></BigButton>
        </Group>
        <Group label="Editing" width={125}>
          <Stack $width={61}>
            <SmallButton><SumIcon />AutoSum<FarCaret $gap={4}><Caret /></FarCaret></SmallButton>
            <SmallButton><FillDownIcon />Fill<Caret /></SmallButton>
            <SmallButton><EraserIcon />Clear<Caret /></SmallButton>
          </Stack>
          <BigButton $width={29}>
            <SortIcon />
            <span>Sort &amp;</span>
            <span>Filter <Caret /></span>
          </BigButton>
          <BigButton $width={28}>
            <FindIcon />
            <span>Find &amp;</span>
            <span>Select <Caret /></span>
          </BigButton>
        </Group>
        <Collapse>
          <Tool aria-label="Collapse ribbon" $width={8}><ChevronIcon up /></Tool>
        </Collapse>
      </Ribbon>

      <FormulaBar>
        <NameBox>
          <input aria-label="Name box" defaultValue="B1" />
          <Caret size={6} />
        </NameBox>
        <Grip>⋮</Grip>
        <FormulaTools>
          <Tool aria-label="Cancel" $width={23}><CloseIcon color="#aaa" size={8} /></Tool>
          <Tool aria-label="Enter" $width={24}><CheckIcon /></Tool>
          <Tool $width={24}><Glyph $italic $serif $bold>fx</Glyph></Tool>
        </FormulaTools>
        <FormulaField>
          <input aria-label="Formula" />
          <ChevronIcon />
        </FormulaField>
      </FormulaBar>

      <SheetArea>
        <Sheet />
        <ScrollColumn>
          <ScrollButton aria-label="Scroll up"><ArrowIcon d="M0 3.500h5L2.500 1z" /></ScrollButton>
          <VerticalThumb />
          <ScrollButton aria-label="Scroll down"><ArrowIcon d="M0 1.500h5L2.500 4z" /></ScrollButton>
        </ScrollColumn>
      </SheetArea>

      <SheetTabs>
        <Tool aria-label="Previous sheet" $width={19} disabled><ArrowIcon d="M4 0v5L1 2.500z" /></Tool>
        <Tool aria-label="Next sheet" $width={20} disabled><ArrowIcon d="M1 0v5l3-2.500z" /></Tool>
        <SheetTab>January</SheetTab>
        <Tool aria-label="New sheet"><AddIcon /></Tool>
        <HorizontalScroll>
          <Grip $narrow>⋮</Grip>
          <ScrollButton aria-label="Scroll left"><ArrowIcon d="M4 0v5L1 2.500z" /></ScrollButton>
          <HorizontalTrack><HorizontalThumb /></HorizontalTrack>
          <ScrollButton aria-label="Scroll right"><ArrowIcon d="M1 0v5l3-2.500z" /></ScrollButton>
        </HorizontalScroll>
      </SheetTabs>
      <StatusBar>
        <span>Ready</span>
        <Stats>
          <span>Average: 8095.714286</span>
          <span>Count: 75</span>
          <span>Sum: 566700</span>
        </Stats>
        <Tool aria-label="Normal view" $width={24} $pressed><ViewIcon d="M3.500.500v8M6.500.500v8M.500 3h9M.500 6h9" /></Tool>
        <Tool aria-label="Page layout view" $width={26}><ViewIcon d="M2.500 1v7M7.500 1v7M4 3h2M4 5h2M4 7h2" /></Tool>
        <Tool aria-label="Page break view" $width={25}><ViewIcon d="M3.500 1v4M6.500 1v4M1 5h5.500" /></Tool>
        <Tool $width={10}><Glyph>−</Glyph></Tool>
        <Zoom type="range" aria-label="Zoom" min="10" max="190" defaultValue="100" />
        <Tool $width={8}><Glyph>+</Glyph></Tool>
        <Percent>100%</Percent>
      </StatusBar>

      <Taskbar>
        <TaskItem aria-label="Start"><WindowsIcon /></TaskItem>
        <TaskItem aria-label="Search"><SearchIcon /></TaskItem>
        <TaskItem aria-label="Cortana"><CortanaIcon /></TaskItem>
        <TaskItem aria-label="Task view"><TaskViewIcon /></TaskItem>
        <TaskItem aria-label="File Explorer" $app><FolderIcon /></TaskItem>
        <TaskItem aria-label="Mail" $app><MailIcon /></TaskItem>
        <TaskItem aria-label="Chrome" $app><Running><ChromeIcon /></Running></TaskItem>
        <TaskItem aria-label="Store" $app><StoreIcon /></TaskItem>
        <TaskItem aria-label="Word" $app><Running><OfficeIcon letter="W" color="#2b579a" /></Running></TaskItem>
        <TaskItem aria-label="Recorder" $app><Running><RecordIcon /></Running></TaskItem>
        <TaskItem aria-label="Excel" $app $active><OfficeIcon letter="X" color="#1e7b45" /></TaskItem>
        <Clock>
          <span>3:49 PM</span>
          <span>12/11/2019</span>
        </Clock>
      </Taskbar>

      <Recorder>
        <svg width="28" height="28" viewBox="0 0 28 28">
          <path d="M1.500 16a12.500 12.500 0 0 0 25 0z" fill="#f0324b" />
          <circle cx="14" cy="14" r="12.500" fill="none" stroke="#5fd6cc" strokeWidth="0.900" />
          <path d="M8.500 8h4.500v12H9.500V11H8.500zM15.500 8h4.500v9h-2v3h-3z" fill="#fff" />
          <path d="M9 8h4v9M15.500 17V8h4" fill="none" stroke="#222" strokeWidth="1.500" />
        </svg>
        6:42
      </Recorder>
      <Pointer width="50" height="50" viewBox="0 0 50 50" fill="none">
        <circle cx="25" cy="25" r="23" stroke="#ecf03a" strokeWidth="2.500" />
        <path d="M25 18.500v11M20 24h10" stroke="#111" strokeWidth="1.600" />
        <path d="m19 24 3-2.500v5zM31 24l-3-2.500v5z" fill="#111" />
      </Pointer>
    </App>
  )
}
